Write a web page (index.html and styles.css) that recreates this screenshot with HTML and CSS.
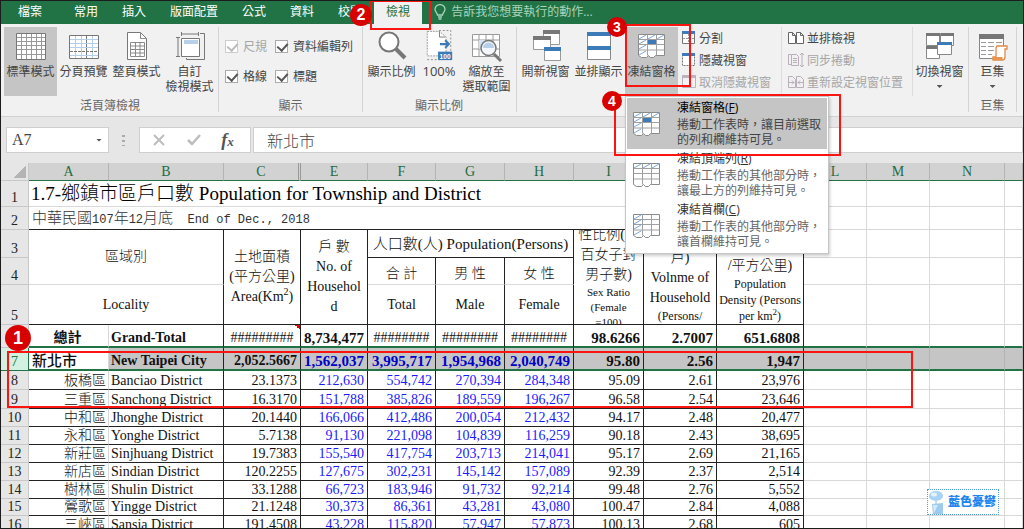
FILE: index.html
```html
<!DOCTYPE html>
<html lang="zh-Hant">
<head>
<meta charset="utf-8">
<title>人口數</title>
<link rel="stylesheet" href="styles.css">
</head>
<body>
<svg class="defs" aria-hidden="true">
  <symbol id="freeze-grid" viewBox="0 0 28 24">
    <path d="M.5.5h26v21h-9l-2 2h-3l-2-2-2 2h-5l-3-2z" fill="#fff" stroke="#8a8a8a"/>
    <path d="M9.500.5v21M18.500.5v21M.5 5.500h26M.5 10.500h26M.5 16h26" stroke="#a0a0a0" fill="none"/>
  </symbol>
</svg>

<nav class="tabs">
  <button class="tab file">檔案</button>
  <button class="tab">常用</button>
  <button class="tab">插入</button>
  <button class="tab">版面配置</button>
  <button class="tab">公式</button>
  <button class="tab">資料</button>
  <button class="tab">校閱</button>
  <button class="tab active">檢視</button>
  <button class="tell"><svg width="12" height="16" viewBox="0 0 12 16" fill="none" stroke="#a9d3ba" stroke-width="1.3"><path d="M3.500 11C3.500 9 1 8 1 5.300a5 4.700 0 0 1 10 0C11 8 8.500 9 8.500 11zM4 13h4M4.500 15h3"/></svg>告訴我您想要執行的動作...</button>
</nav>

<div class="ribbon">
  <section class="group views">
    <div class="body">
      <button class="big pressed"><svg width="32" height="28" viewBox="0 0 32 28"><path d="M1.500 1.500h29v26h-29z" fill="#fff" stroke="#777"/><path d="M6.500 2v25M11.500 2v25M16.500 2v25M21.500 2v25M26.500 2v25M2 5.500h28M2 9.500h28M2 13.500h28M2 17.500h28M2 22.500h28" stroke="#999"/></svg>標準模式</button>
      <button class="big"><svg width="32" height="28" viewBox="0 0 32 28"><path d="M1.500 3.500h29v23h-29z" fill="#fff" stroke="#777"/><path d="M7.500 4v22M13.500 4v22M24.500 4v22M2 7.500h28M2 11.500h28M2 15.500h28M2 23.500h28" stroke="#b4cfea"/><path d="M18.500 4v22M2 19.500h28" stroke="#777" stroke-dasharray="3 1"/></svg>分頁預覽</button>
      <button class="big"><svg width="22" height="30" viewBox="0 0 22 30"><path d="M1.500 1.500h13l6 6v21h-19z" fill="#fff" stroke="#777"/><path d="M14.500 1.500v6h6M4.500 11.500h14v14h-14zM4.500 15h14M4.500 18.500h14M4.500 22h14M9.500 11.500v14M14 11.500v14" fill="none" stroke="#8a8a8a"/></svg>整頁模式</button>
      <button class="big"><svg width="32" height="30" viewBox="0 0 32 30"><g fill="none" stroke="#777"><path d="M7 3h18M7.500 1v4M24.500 1v4M4 7v18M2 6.500h4M2 25.500h4"/><path d="M26 2.500h4.500v26h-18V27"/><path d="M7.500 7.500h18v18h-18z" fill="#fff"/></g><path d="M10 9h14v4H10z" fill="#b8cfe9"/></svg><span>自訂<br>檢視模式</span></button>
    </div>
    <h2>活頁簿檢視</h2>
  </section>

  <section class="group show">
    <div class="body checks">
      <label class="check off"><input type="checkbox" checked disabled>尺規</label>
      <label class="check"><input type="checkbox" checked>資料編輯列</label>
      <label class="check"><input type="checkbox" checked>格線</label>
      <label class="check"><input type="checkbox" checked>標題</label>
    </div>
    <h2>顯示</h2>
  </section>

  <section class="group zoom">
    <div class="body">
      <button class="big"><svg width="30" height="30" viewBox="0 0 30 30"><circle cx="12" cy="11" r="9.500" fill="#fff" stroke="#777" stroke-width="2"/><path d="M19 18l9 9" stroke="#777" stroke-width="4"/></svg>顯示比例</button>
      <button class="big narrow"><svg width="30" height="34" viewBox="0 0 30 34"><path d="M2.500 1.500h13l7 6v20h-20z" fill="#fff" stroke="#999" stroke-dasharray="2 1"/><path d="M2.500 31.500h12M15 .5h12.500v22" fill="none" stroke="#888" stroke-dasharray="2 2"/><path d="M15.500 1.500v6h6" fill="none" stroke="#777"/><path d="M16 15h9M21.500 11l4 4-4 4" fill="none" stroke="#3d7ab8" stroke-width="2.200"/><path d="M14 23h15v9H14z" fill="#3d7ab8"/><text x="21.500" y="30.500" class="hundred">100</text></svg>100%</button>
      <button class="big"><svg width="32" height="30" viewBox="0 0 32 30"><path d="M1.500 3.500h27v22h-27zM1.500 9h27M1.500 18h27M8 3.500v22M15 3.500v22M22 3.500v22" fill="#fff" stroke="#999"/><path d="M8 9h8v9H8z" fill="#d5e2f1"/><circle cx="17.500" cy="17" r="7.500" fill="#f3f6fa" stroke="#777" stroke-width="1.500"/><path d="M12 17a5.500 5.500 0 0 1 11 0z" fill="#b8cfe9"/><path d="M23 23l7 7" stroke="#777" stroke-width="3"/></svg><span>縮放至<br>選取範圍</span></button>
    </div>
    <h2>顯示比例</h2>
  </section>

  <section class="group window">
    <div class="body">
      <button class="big"><svg width="32" height="32" viewBox="0 0 32 32"><g fill="#fff" stroke="#999"><path d="M13.500.5h16v14h-16z"/><path d="M3.500 6.500h17v13h-17z"/><path d="M14.500 17.500h16v13h-16z"/></g><path d="M13 0h17v4H13zM3 6h18v4H3z" fill="#777"/><path d="M14 17h17v4H14z" fill="#3d7ab8"/></svg>開新視窗</button>
      <button class="big"><svg width="26" height="30" viewBox="0 0 26 30"><path d="M1.500 1.500h23v27h-23z" fill="#fff" stroke="#888"/><path d="M1 1h24v4H1zM1 15h24v4H1z" fill="#3d7ab8"/></svg>並排顯示</button>
      <div class="drop">
        <button class="big pressed"><svg width="28" height="24" viewBox="0 0 28 24"><use href="#freeze-grid"/><path d="M1 5l7-4M10 5l7-4M19 5l7-4M1 10l7-4M1 15l7-4M1 21l7-4" stroke="#7da7d4"/><path d="M10 6h8v4h-8z" fill="#3d7ab8"/></svg>凍結窗格<i class="caret faint"></i></button>
        <div class="menu">
          <button class="item current"><svg width="28" height="24" viewBox="0 0 28 24"><use href="#freeze-grid"/><path d="M1 5l7-4M10 5l7-4M19 5l7-4M1 10l7-4M1 15l7-4M1 21l7-4" stroke="#7da7d4"/><path d="M10 6h8v4h-8z" fill="#3d7ab8"/></svg><span><b>凍結窗格(<u>F</u>)</b>捲動工作表時，讓目前選取<br>的列和欄維持可見。</span></button>
          <button class="item"><svg width="28" height="24" viewBox="0 0 28 24"><use href="#freeze-grid"/><path d="M1 5l7-4M10 5l7-4M19 5l7-4" stroke="#7da7d4"/></svg><span><b>凍結頂端列(<u>R</u>)</b>捲動工作表的其他部分時，<br>讓最上方的列維持可見。</span></button>
          <button class="item"><svg width="28" height="24" viewBox="0 0 28 24"><use href="#freeze-grid"/><path d="M1 5l7-4M1 10l7-4M1 15l7-4M1 21l7-4" stroke="#7da7d4"/></svg><span><b>凍結首欄(<u>C</u>)</b>捲動工作表的其他部分時，<br>讓首欄維持可見。</span></button>
        </div>
      </div>
      <div class="smalls">
        <button class="small"><svg width="16" height="16" viewBox="0 0 16 16"><path d="M1.500 1.500h12v12h-12z" fill="#fff" stroke="#777"/><path d="M1 1h13v3H1z" fill="#3d7ab8"/><path d="M2 8.500h11M7.500 4v9" stroke="#999" stroke-dasharray="2 1"/></svg>分割</button>
        <button class="small"><svg width="16" height="16" viewBox="0 0 16 16"><path d="M1.500 1.500h12v12h-12z" fill="#fff" stroke="#777" stroke-dasharray="2 1"/><path d="M1 1h13v3H1z" fill="#3d7ab8"/></svg>隱藏視窗</button>
        <button class="small" disabled><svg width="16" height="16" viewBox="0 0 16 16"><path d="M1.500 1.500h13v12h-13z" fill="#f6f1f6" stroke="#b9b3b9"/><path d="M1 1h14v3H1z" fill="#bcb4bd"/></svg>取消隱藏視窗</button>
      </div>
      <div class="smalls side">
        <button class="small"><svg width="18" height="16" viewBox="0 0 18 16" fill="#fff" stroke="#666"><path d="M1.500 2.500h4l3 3v8h-7zM9.500 2.500h4l3 3v8h-7zM5.500 2.500v3h3M13.500 2.500v3h3"/></svg>並排檢視</button>
        <button class="small" disabled><svg width="18" height="16" viewBox="0 0 18 16" fill="none" stroke="#b9aeb9"><path d="M4 2.500H1.500v10H4M4.500 2.500h5l2 2v9h-7zM6 6.500h4M6 8.500h4M6 10.500h4M15 1v14M13 3l2-2 2 2M13 13l2 2 2-2"/></svg>同步捲動</button>
        <button class="small" disabled><svg width="18" height="16" viewBox="0 0 18 16" fill="none" stroke="#b9aeb9"><path d="M1.500 2.500h4l3 3v8h-7zM9.500 2.500h4l3 3v8h-7zM2 8.500h5M5 6.500l2 2-2 2M16 8.500h-5M13 6.500l-2 2 2 2"/></svg>重新設定視窗位置</button>
      </div>
      <button class="big"><svg width="30" height="28" viewBox="0 0 30 28"><g fill="#fff" stroke="#888"><path d="M1.500 1.500h13v12h-13zM15.500 1.500h13v12h-13zM1.500 14.500h13v12h-13z"/><path d="M12.500 11.500h14v11h-14z"/></g><path d="M1 1h14v3H1zM16 1h13v3H16zM1 14h11v3H1z" fill="#777"/><path d="M12 10h15v3H12z" fill="#3d7ab8"/></svg>切換視窗<i class="caret"></i></button>
    </div>
  </section>

  <section class="group macro">
    <div class="body">
      <button class="big"><svg width="30" height="30" viewBox="0 0 30 30"><path d="M1.500 3.500h24v24h-24z" fill="#fff" stroke="#888"/><path d="M1 3h25v5H1z" fill="#777"/><path d="M3 11.500h5M10 11.500h6M18 11.500h6M3 15.500h5M10 15.500h6M3 19.500h5M10 19.500h6M3 23.500h5M10 23.500h4" stroke="#999"/><path d="M19 15h10v3h-2v8c0 2-1 3-3 3h-9v-3h3V17z" fill="#fff" stroke="#e08b48" stroke-width="1.300"/><path d="M14.500 26h10v3h-10z" fill="#e8964f"/></svg>巨集<i class="caret"></i></button>
    </div>
    <h2>巨集</h2>
  </section>
</div>

<div class="formula">
  <div class="namebox"><input type="text" value="A7" aria-label="名稱方塊"><i class="caret"></i></div>
  <div class="dots"></div>
  <div class="fx">
    <button aria-label="取消"><svg width="14" height="14" viewBox="0 0 14 14"><path d="M2 2l10 10M12 2L2 12" stroke="#bdbdbd" stroke-width="2"/></svg></button>
    <button aria-label="輸入"><svg width="14" height="14" viewBox="0 0 14 14"><path d="M1 7l4 4 8-9" fill="none" stroke="#bdbdbd" stroke-width="2.500"/></svg></button>
    <button class="fn" aria-label="插入函數">f<small>x</small></button>
  </div>
  <input class="content" type="text" value="新北市" aria-label="資料編輯列">
</div>

<main class="sheet">
<table>
  <colgroup><col class="w-h"><col class="w-a"><col class="w-b"><col class="w-c"><col class="w-e"><col class="w-f"><col class="w-g"><col class="w-g"><col class="w-i"><col class="w-j"><col class="w-k"><col class="w-l"><col class="w-l"><col class="w-n"><col></colgroup>
  <thead>
    <tr class="h18"><th class="corner"></th><th>A</th><th>B</th><th class="hides">C</th><th>E</th><th>F</th><th>G</th><th>H</th><th>I</th><th>J</th><th>K</th><th>L</th><th>M</th><th>N</th><th></th></tr>
  </thead>
  <tbody class="top">
    <tr class="h26"><th>1</th><td class="title" colspan="10">1.7-鄉鎮市區戶口數 Population for Township and District</td><td class="g"></td><td class="g"></td><td class="g"></td><td class="g"></td></tr>
    <tr class="h23"><th>2</th><td class="date" colspan="10">中華民國<span>107</span>年<span>12</span>月底<span>&nbsp; End of Dec., 2018</span></td><td class="g"></td><td class="g"></td><td class="g"></td><td class="g"></td></tr>
    <tr class="h28"><th>3</th><td class="soft" colspan="2" rowspan="2">區域別</td><td rowspan="3">土地面積<br>(平方公里)<br>Area(Km<sup>2</sup>)</td><td rowspan="3">戶 數<br>No. of<br>Househol<br>d</td><td colspan="3" class="wide">人口數(人) Population(Persons)</td><td rowspan="3"><div class="clip">性比例(每<br>百女子對<br>男子數)<small>Sex Ratio<br>(Female<br>=100)</small></div></td><td rowspan="3" class="low">戶)<br>Volnme of<br>Household<small class="mid">(Persons/</small></td><td rowspan="3" class="low">/平方公里)<small class="mid">Population<br>Density (Persons<br>per km<sup>2</sup>)</small></td><td class="g"></td><td class="g"></td><td class="g"></td><td class="g"></td></tr>
    <tr class="h27"><th>4</th><td class="soft low">合 計</td><td class="soft low">男 性</td><td class="soft low">女 性</td><td class="g"></td><td class="g"></td><td class="g"></td><td class="g"></td></tr>
    <tr class="h40"><th>5</th><td colspan="2">Locality</td><td>Total</td><td>Male</td><td>Female</td><td class="g"></td><td class="g"></td><td class="g"></td><td class="g"></td></tr>
  </tbody>
  <tbody class="data">
    <tr class="h23 total"><th>6</th><td>總計</td><td>Grand-Total</td><td class="note">#########</td><td>8,734,477</td><td>########</td><td>########</td><td>########</td><td>98.6266</td><td>2.7007</td><td>651.6808</td><td class="g"></td><td class="g"></td><td class="g"></td><td class="g"></td></tr>
    <tr class="h23 selected"><th>7</th><td>新北市</td><td>New Taipei City</td><td>2,052.5667</td><td>1,562,037</td><td>3,995,717</td><td>1,954,968</td><td>2,040,749</td><td>95.80</td><td>2.56</td><td>1,947</td><td class="g"></td><td class="g"></td><td class="g"></td><td class="g"></td></tr>
    <tr class="h19"><th>8</th><td>板橋區</td><td>Banciao District</td><td>23.1373</td><td>212,630</td><td>554,742</td><td>270,394</td><td>284,348</td><td>95.09</td><td>2.61</td><td>23,976</td><td class="g"></td><td class="g"></td><td class="g"></td><td class="g"></td></tr>
    <tr class="h19"><th>9</th><td>三重區</td><td>Sanchong District</td><td>16.3170</td><td>151,788</td><td>385,826</td><td>189,559</td><td>196,267</td><td>96.58</td><td>2.54</td><td>23,646</td><td class="g"></td><td class="g"></td><td class="g"></td><td class="g"></td></tr>
    <tr class="h18"><th>10</th><td>中和區</td><td>Jhonghe District</td><td>20.1440</td><td>166,066</td><td>412,486</td><td>200,054</td><td>212,432</td><td>94.17</td><td>2.48</td><td>20,477</td><td class="g"></td><td class="g"></td><td class="g"></td><td class="g"></td></tr>
    <tr class="h18"><th>11</th><td>永和區</td><td>Yonghe District</td><td>5.7138</td><td>91,130</td><td>221,098</td><td>104,839</td><td>116,259</td><td>90.18</td><td>2.43</td><td>38,695</td><td class="g"></td><td class="g"></td><td class="g"></td><td class="g"></td></tr>
    <tr class="h18"><th>12</th><td>新莊區</td><td>Sinjhuang District</td><td>19.7383</td><td>155,540</td><td>417,754</td><td>203,713</td><td>214,041</td><td>95.17</td><td>2.69</td><td>21,165</td><td class="g"></td><td class="g"></td><td class="g"></td><td class="g"></td></tr>
    <tr class="h18"><th>13</th><td>新店區</td><td>Sindian District</td><td>120.2255</td><td>127,675</td><td>302,231</td><td>145,142</td><td>157,089</td><td>92.39</td><td>2.37</td><td>2,514</td><td class="g"></td><td class="g"></td><td class="g"></td><td class="g"></td></tr>
    <tr class="h18"><th>14</th><td>樹林區</td><td>Shulin District</td><td>33.1288</td><td>66,723</td><td>183,946</td><td>91,732</td><td>92,214</td><td>99.48</td><td>2.76</td><td>5,552</td><td class="g"></td><td class="g"></td><td class="g"></td><td class="g"></td></tr>
    <tr class="h17"><th>15</th><td>鶯歌區</td><td>Yingge District</td><td>21.1248</td><td>30,373</td><td>86,361</td><td>43,281</td><td>43,080</td><td>100.47</td><td>2.84</td><td>4,088</td><td class="g"></td><td class="g"></td><td class="g"></td><td class="g"></td></tr>
    <tr class="h18"><th>16</th><td>三峽區</td><td>Sansia District</td><td>191.4508</td><td>43,228</td><td>115,820</td><td>57,947</td><td>57,873</td><td>100.13</td><td>2.68</td><td>605</td><td class="g"></td><td class="g"></td><td class="g"></td><td class="g"></td></tr>
  </tbody>
</table>
</main>

<div class="mark m1"></div><span class="num n1">1</span>
<div class="mark m2"></div><span class="num n2">2</span>
<div class="mark m3"></div><span class="num n3">3</span>
<div class="mark m4"></div><span class="num n4">4</span>

<div class="stamp"><svg width="18" height="24" viewBox="0 0 18 24"><ellipse cx="8" cy="6" rx="7" ry="5" fill="#a9d3f5"/><ellipse cx="6" cy="4.500" rx="3" ry="2" fill="#e4f2fd"/><path d="M8 11v3" stroke="#8fbfe6"/><path d="M4 14l11-1v11H5z" fill="#9fcbee"/><path d="M5 15l5 0-4 8z" fill="#d4e9fa"/></svg>藍色憂鬱</div>
</body>
</html>
```
FILE: styles.css
```css
* { box-sizing: border-box; }

body {
  position: relative;
  display: flex;
  flex-direction: column;
  height: 100vh;
  margin: 0;
  border: 1px solid #1c1c1c;
  overflow: hidden;
  background: #fff;
  color: #444;
  font: 12px/15px "Open Sans", "Noto Sans CJK TC", sans-serif;
}

button, input { margin: 0; padding: 0; border: 0; background: none; color: inherit; font: inherit; }
button { white-space: nowrap; }
svg { display: block; flex: none; }
.defs { position: absolute; width: 0; height: 0; }

/* tabs */
.tabs { display: flex; flex: none; height: 23px; background: #217346; color: #fff; }
.tab { padding: 0 12px 2px; }
.tab.file { padding: 0 20px 2px 17px; }
.tab.active { background: #f1f1f1; color: #217346; }
.tell { display: flex; align-items: center; gap: 5px; padding: 0 12px 2px; color: #a9d3ba; }

/* ribbon */
.ribbon {
  display: flex;
  flex: none;
  height: 93px;
  padding: 3px 0 4px;
  border-bottom: 1px solid #d2d2d2;
  background: #f1f1f1;
}
.group { display: flex; flex: none; flex-direction: column; border-right: 1px solid #d4d4d4; }
.body { display: flex; flex: none; height: 69px; }
.group h2 { margin: 2px 0 0; color: #666; font-size: 12px; font-weight: 400; line-height: 15px; text-align: center; }
.views { padding: 0 2px 0 3px; }
.zoom { padding: 0 3px 0 2px; }
.window { padding: 0 2px; }

.big { display: flex; flex-direction: column; align-items: center; justify-content: flex-start; width: 53px; height: 69px; padding-top: 3px; line-height: 15px; text-align: center; }
.big svg { height: 32px; margin-bottom: 2px; }
.big.narrow { width: 42px; font-size: 13px; }
.big.pressed { background: #c5c5c5; }
.hundred { fill: #fff; font: bold 7px "Liberation Sans", sans-serif; text-anchor: middle; }
.macro .big { width: 47px; }

.caret { display: block; width: 6px; height: 3px; margin: 6px auto 0; background: #555; clip-path: polygon(0 0, 100% 0, 50% 100%); }
.caret.faint { background: #aaa; }

.checks { display: grid; grid-template-columns: 50px auto; grid-template-rows: 30px 30px; padding: 4px 9px 0 6px; }
.check { display: flex; align-items: center; gap: 5px; white-space: nowrap; }
.check.off { color: #a6a6a6; }
.check input { position: relative; width: 13px; height: 13px; border: 1px solid #ababab; background: #fff; appearance: none; }
.check input::after {
  content: "";
  position: absolute;
  left: 3px;
  top: 0;
  width: 5px;
  height: 8px;
  border: solid #555;
  border-width: 0 2px 2px 0;
  transform: rotate(42deg);
}
.check.off input { border-color: #ccc; }
.check.off input::after { border-color: #bbb; }

.smalls { display: flex; flex-direction: column; padding: 0 10px 0 3px; }
.small { display: flex; align-items: center; gap: 2px; height: 22px; }
.small:disabled { color: #a6a6a6; }
.smalls.side {
  padding: 0 9px 0 5px;
  border: solid #dcdcdc;
  border-width: 0 1px;
}

/* drop-down menu */
.drop { position: relative; }
.menu {
  position: absolute;
  z-index: 2;
  top: 69px;
  left: 0;
  width: 204px;
  padding: 1px 1px 2px;
  border: 1px solid #c6c6c6;
  background: #fff;
  box-shadow: 1px 2px 3px #0003;
}
.item { display: flex; align-items: center; width: 100%; height: 51px; padding-left: 6px; gap: 16px; color: #666; text-align: left; }
.item b { display: block; margin-bottom: 2px; color: #333; font-weight: 400; }
.item.current { background: #c5c5c5; color: #444; }
.item.current b { color: #000; }

/* formula bar */
.formula { display: flex; flex: none; height: 46px; padding: 10px 0 10px 5px; background: #e6e6e6; }
.namebox, .fx, .content { border: 1px solid #cfcfcf; background: #fff; }
.namebox { display: flex; align-items: center; width: 103px; padding: 0 6px 0 5px; }
.namebox input { flex: 1; min-width: 0; font: 16px "Liberation Serif", serif; }
.namebox .caret { margin: 0; }
.dots { width: 3px; height: 11px; margin: 8px 14px 0 13px; background: repeating-linear-gradient(#aaa 0 2px, #e6e6e6 2px 5px); }
.fx { display: flex; width: 112px; padding: 0 6px 0 2px; justify-content: space-around; align-items: center; }
.fx .fn { color: #555; font: italic bold 18px "Liberation Serif", serif; }
.fn small { font-size: 13px; }
.content { flex: 1; min-width: 0; margin-left: 2px; padding-left: 13px; font: 300 16px "Liberation Serif", "Noto Sans CJK TC", serif; }

/* worksheet */
.sheet { flex: 1; min-height: 0; overflow: hidden; }
table {
  width: 100%;
  table-layout: fixed;
  border-spacing: 0;
  color: #111;
  font: 300 14px/16px "Liberation Serif", "Noto Sans CJK TC", serif;
}
.w-h { width: 28px; }
.w-a { width: 80px; }
.w-b { width: 115px; }
.w-c { width: 77px; }
.w-e { width: 67px; }
.w-f { width: 68px; }
.w-g { width: 69px; }
.w-i { width: 70px; }
.w-j { width: 73px; }
.w-k { width: 87px; }
.w-l { width: 63px; }
.w-n { width: 75px; }
.h17 { height: 17px; }
.h18 { height: 18px; }
.h19 { height: 19px; }
.h23 { height: 23px; }
.h26 { height: 26px; }
.h27 { height: 27px; }
.h28 { height: 28px; }
.h40 { height: 40px; }

th, td { padding: 0; border: solid #222; border-width: 0 1px 1px 0; white-space: nowrap; }
thead th { border-color: #b4b4b4; border-bottom-color: #217346; background: #d2d2d2; color: #1f6b42; font-weight: 400; }
thead .hides { border-right: 3px double #999; }
thead .corner { border-color: #c8c8c8; background: linear-gradient(135deg, #e6e6e6 50%, #b4b4b4 50%) no-repeat 13px 3px / 12px 12px #e6e6e6; }
tbody th { border-color: #c8c8c8; background: #e6e6e6; color: #222; font-weight: 400; vertical-align: bottom; }
tbody .g { border-color: #d9d9d9; }

.top td { text-align: center; line-height: 20px; }
.top .title { padding-left: 2px; border-color: #d9d9d9; color: #000; font-size: 19px; line-height: 24px; text-align: left; }
.top .date { padding-left: 3px; border-right-color: #d9d9d9; color: #333; font-size: 15px; text-align: left; }
.date span { font: 12px "Liberation Mono", monospace; }
.top .soft { border-bottom-color: #d9d9d9; }
.top .wide { font-size: 15px; }
.top small { display: block; font-size: 11px; line-height: 15px; }
.top .mid { font-size: 12px; line-height: 16px; }
.top .low { vertical-align: bottom; }
sup { font-size: 10px; line-height: 0; }
.mid sup { font-size: 9px; }
.clip { display: flex; flex-direction: column; justify-content: center; height: 94px; overflow: hidden; }

.data td { text-align: right; vertical-align: bottom; padding-right: 3px; }
.data td:nth-child(2) { border-right-color: #d9d9d9; padding-right: 2px; }
.data td:nth-child(3) { padding-left: 2px; text-align: left; }
.data td:nth-child(n+5):nth-child(-n+8) { color: #1a1aff; }
.data .total td, .data .selected td { border-bottom: 2px solid #217346; font-weight: 700; }
.data .total td:nth-child(n+5), .data .selected td:nth-child(n+5) { font-size: 15px; }
.data .total td:nth-child(n+5):nth-child(-n+8) { color: #111; }
.data .total td:nth-child(2) { text-align: center; }
.data .total td:nth-child(n+6):nth-child(-n+8) { padding: 0; font-size: 14px; font-weight: 400; text-align: center; }
.data .total .note {
  padding: 0;
  font-weight: 400;
  text-align: center;
  background: linear-gradient(45deg, #fff0 50%, #e00000 50%) no-repeat right top / 5px 5px;
}
.data .selected td { background: #c5c5c5; }
.data .selected td:nth-child(n+5):nth-child(-n+8) { color: #0000c8; }
.data .selected td:nth-child(2) { padding-left: 3px; background: #fff; font-size: 15px; font-weight: 500; text-align: left; }
.data .selected .g { border-right-color: #b4b4b4; }
.data .selected th { border-color: #217346; background: #d3f0e0; color: #217346; }

/* callouts */
.mark { position: absolute; z-index: 3; border: 2px solid #fb1410; pointer-events: none; }
.m1 { left: 6px; top: 350px; width: 906px; height: 57px; }
.m2 { left: 369px; top: -1px; width: 61px; height: 30px; }
.m3 { left: 624px; top: 23px; width: 66px; height: 63px; }
.m4 { left: 613px; top: 93px; width: 227px; height: 62px; }
.num {
  position: absolute;
  z-index: 4;
  display: grid;
  place-items: center;
  width: 20px;
  height: 20px;
  border-radius: 50%;
  background: #d90000;
  color: #fff;
  font: bold 14px "Liberation Sans", sans-serif;
}
.n1 { left: 4px; top: 324px; width: 26px; height: 26px; font-size: 18px; }
.n2 { left: 349px; top: 3px; width: 22px; height: 22px; font-size: 16px; }
.n3 { left: 606px; top: 16px; }
.n4 { left: 601px; top: 90px; }

.stamp {
  position: absolute;
  right: 24px;
  bottom: 13px;
  display: flex;
  align-items: center;
  gap: 2px;
  height: 26px;
  padding: 0 2px 0 0;
  border: 1px dotted #4d9bea;
  background: #fff;
  color: #1e86ee;
  font-weight: 900;
  line-height: 20px;
}
```
